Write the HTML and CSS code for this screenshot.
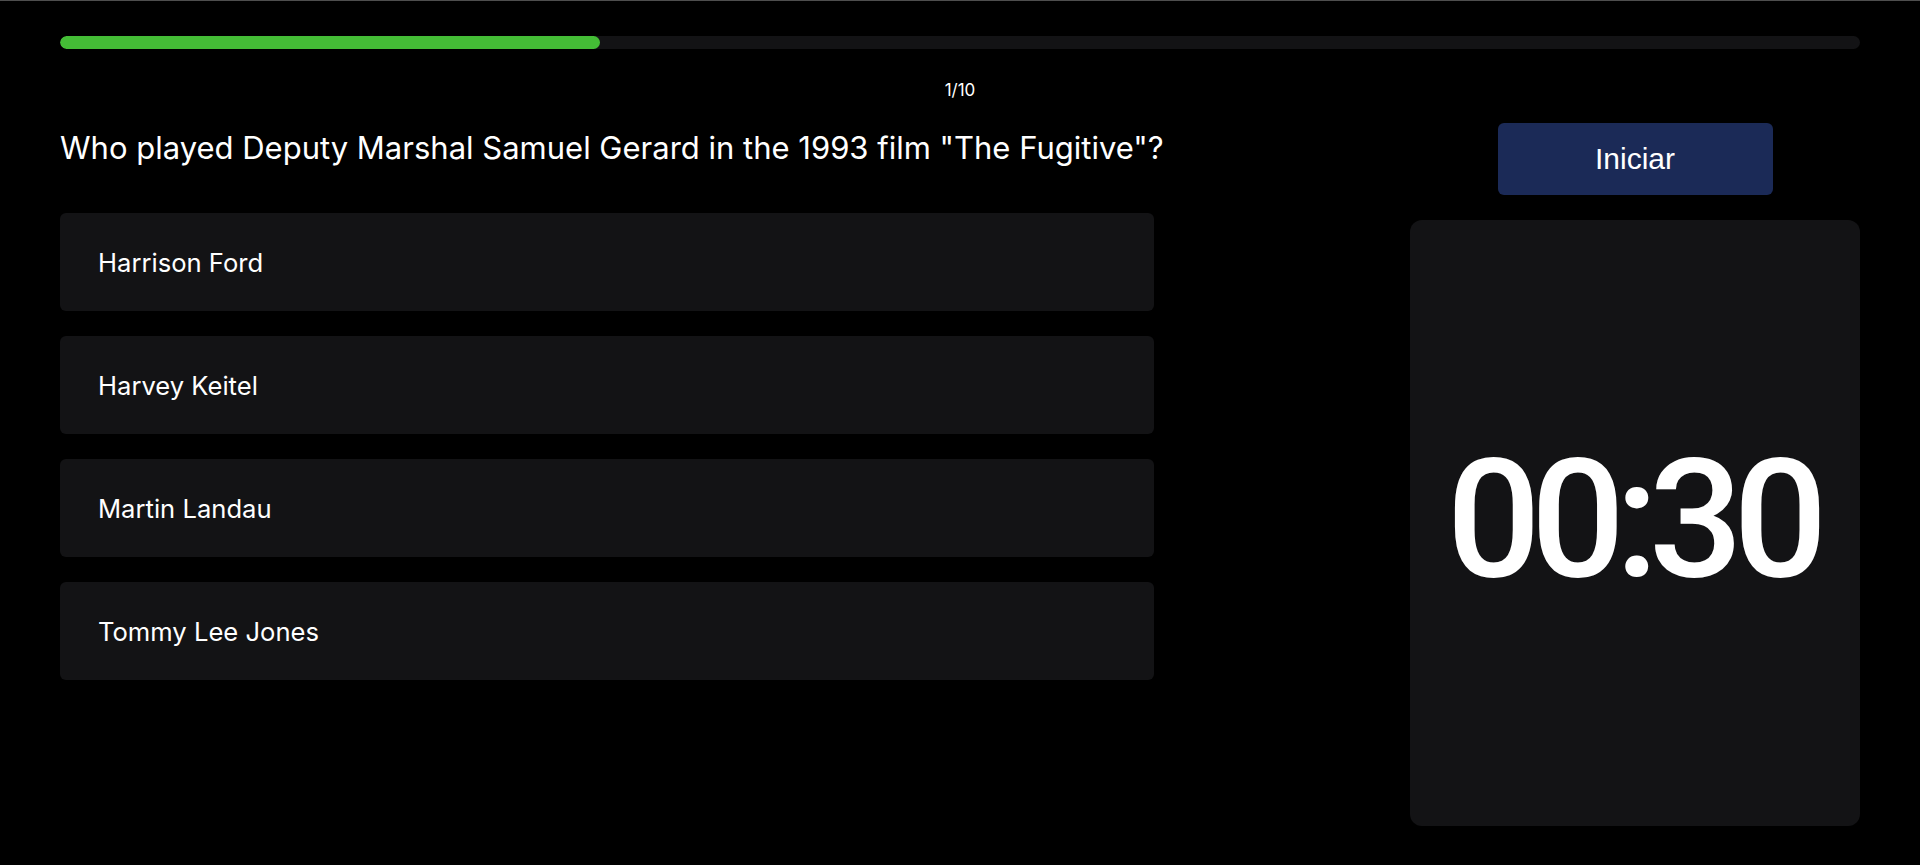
FILE: index.html
```html
<!DOCTYPE html>
<html lang="en">
<head>
<meta charset="utf-8">
<title>Quiz</title>
<link rel="stylesheet" href="styles.css">
</head>
<body>
  <div class="page">
    <div class="progress">
      <div class="progress-fill" style="width: 30%"></div>
    </div>
    <div class="counter">1/10</div>
    <div class="main">
      <section class="quiz">
        <h1 class="question">Who played Deputy Marshal Samuel Gerard in the 1993 film "The Fugitive"?</h1>
        <div class="answers">
          <button class="answer">Harrison Ford</button>
          <button class="answer">Harvey Keitel</button>
          <button class="answer">Martin Landau</button>
          <button class="answer">Tommy Lee Jones</button>
        </div>
      </section>
      <aside class="side">
        <button class="start">Iniciar</button>
        <div class="timer-panel">
          <div class="timer">00:30</div>
        </div>
      </aside>
    </div>
  </div>
</body>
</html>
```

FILE: styles.css
```css
html, body {
  margin: 0;
  padding: 0;
  background: #000;
  height: 100%;
}

body {
  border-top: 1px solid #4e4e4e;
  box-sizing: border-box;
  color: #fff;
  font-family: Inter, "Noto Sans", sans-serif;
}

.page {
  padding: 35px 60px 0 60px;
}

.progress {
  height: 13px;
  border-radius: 7px;
  background: #131315;
  overflow: hidden;
}

.progress-fill {
  height: 100%;
  background: #44bd36;
  border-radius: 7px;
}

.counter {
  margin-top: 31px;
  text-align: center;
  font-size: 17px;
  line-height: 20px;
  color: #fff;
}

.main {
  margin-top: 22px;
  display: flex;
  justify-content: space-between;
  align-items: flex-start;
}

.quiz {
  width: 1094px;
}

.question {
  margin: 0;
  padding-top: 8px;
  font-size: 31px;
  font-weight: 400;
  line-height: 36px;
  white-space: nowrap;
}

.answers {
  margin-top: 47px;
  display: flex;
  flex-direction: column;
  gap: 25px;
}

.answer {
  height: 98px;
  border: none;
  border-radius: 6px;
  background: #131315;
  color: #fff;
  text-align: left;
  padding: 0 38px;
  font-family: Inter, "Noto Sans", sans-serif;
  font-size: 25.6px;
  font-weight: 400;
}

.side {
  width: 450px;
  margin-top: 1px;
  display: flex;
  flex-direction: column;
  align-items: center;
}

.start {
  width: 275px;
  height: 72px;
  border: none;
  border-radius: 6px;
  background: #1b2a57;
  color: #fff;
  font-family: "Liberation Sans", Arial, sans-serif;
  font-size: 30px;
  padding-bottom: 2px;
}

.timer-panel {
  margin-top: 25px;
  width: 100%;
  height: 606px;
  border-radius: 12px;
  background: #131315;
  display: flex;
  align-items: center;
  justify-content: center;
  padding-bottom: 8px;
  box-sizing: border-box;
}

.timer {
  font-family: Roboto, "Noto Sans", sans-serif;
  font-weight: 500;
  font-size: 166px;
  letter-spacing: -10px;
  margin-right: 6px;
  color: #fff;
}
```
